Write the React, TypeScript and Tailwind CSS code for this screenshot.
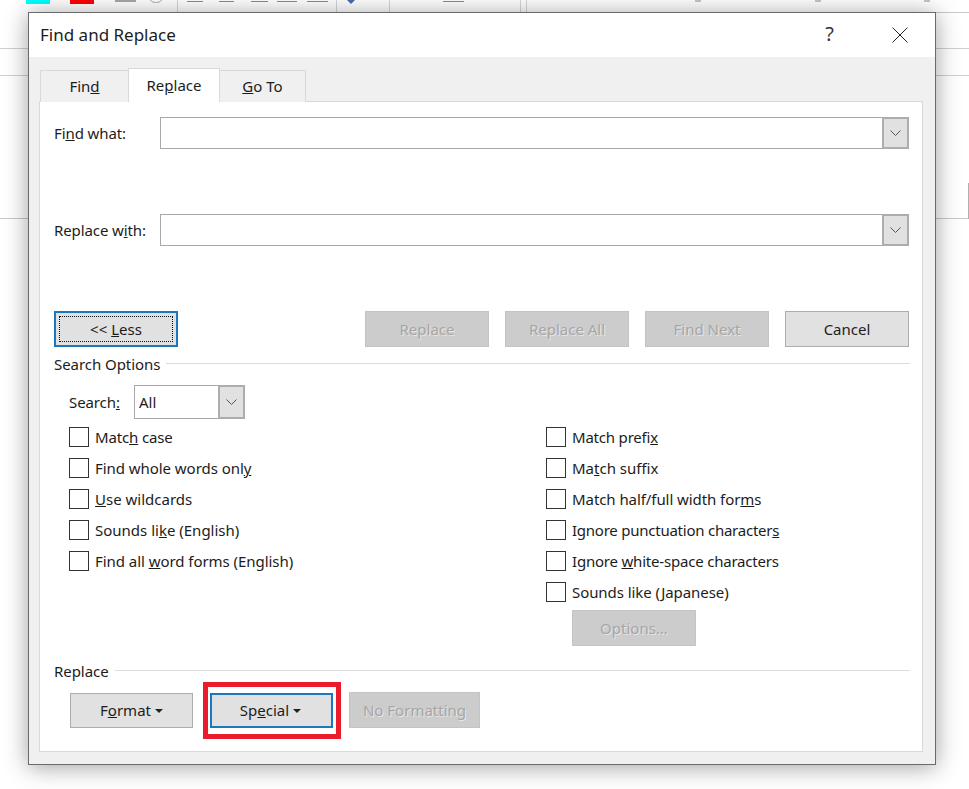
const font = "font-['Noto_Sans','Open_Sans',sans-serif]";

function Chevron() {
  return (
    <svg width="11" height="6" viewBox="0 0 11 6" fill="none" stroke="#555555" strokeWidth="1">
      <path d="M0.5 0.5 L5.5 5.5 L10.5 0.5" />
    </svg>
  );
}

function Combo() {
  return (
    <div className="flex h-[32px] flex-1 border border-[#a8a8a8] bg-white">
      <div className="flex-1" />
      <div className="-my-px -mr-px flex w-[27px] items-center justify-center border-2 border-[#adadad] bg-[#e1e1e1]">
        <Chevron />
      </div>
    </div>
  );
}

function Check({ children, className = "" }: { children: React.ReactNode; className?: string }) {
  return (
    <div className="flex h-[31px] items-start gap-[6px]">
      <div className="h-[20px] w-[20px] shrink-0 border border-[#333333] bg-white" />
      <div className={"text-[15px] leading-[20px] text-[#1c1c1c] whitespace-nowrap " + className}>{children}</div>
    </div>
  );
}

function Btn({ children, disabled, className = "" }: { children: React.ReactNode; disabled?: boolean; className?: string }) {
  return (
    <div
      className={
        "flex h-[36px] w-[124px] items-center justify-center text-[15px] whitespace-nowrap border " +
        (disabled
          ? "border-[#c4c4c4] bg-[#cccccc] text-[#a6a6a6] [text-shadow:1px_1px_0_#e6e6e6] "
          : "border-[#adadad] bg-[#e1e1e1] text-[#1c1c1c] ") +
        className
      }
    >
      {children}
    </div>
  );
}

function Section({ title }: { title: string }) {
  return (
    <div className="-mr-px flex h-[18px] items-center gap-[6px]">
      <span className="text-[15px] leading-[18px] tracking-[-0.05px] text-[#1c1c1c] whitespace-nowrap">{title}</span>
      <div className="mb-[2px] h-px flex-1 bg-[#dcdcdc]" />
    </div>
  );
}

function Caret() {
  return <span className="ml-[4px] inline-block border-x-[4px] border-t-[4px] border-x-transparent border-t-[#222222] align-[4px]" />;
}

function Backdrop() {
  const marks = [
    "left-[187px] w-[16px]", "left-[219px] w-[15px]", "left-[251px] w-[17px]", "left-[277px] w-[20px]",
    "left-[307px] w-[21px]", "left-[443px] w-[21px]",
  ];
  return (
    <div className="absolute inset-0">
      <div className="absolute left-[26px] top-0 h-[4px] w-[24px] bg-[#00ffff]" />
      <div className="absolute left-[70px] top-0 h-[4px] w-[24px] bg-[#ff0000]" />
      <div className="absolute left-[115px] top-0 h-[2px] w-[21px] bg-[#a6a6a6]" />
      <div className="absolute left-[148px] -top-[12px] h-[15px] w-[16px] rounded-full border border-[#a6a6a6]" />
      {marks.map((m) => (
        <div key={m} className={"absolute top-[1px] h-px bg-[#8c8c8c] " + m} />
      ))}
      {[177, 336, 389, 520, 526].map((x) => (
        <div key={x} className="absolute top-0 h-[12px] w-px bg-[#d6d6d6]" style={{ left: x }} />
      ))}
      {[695, 815, 924].map((x) => (
        <div key={x} className="absolute top-0 h-[2px] w-[6px] bg-[#c4c4c4]" style={{ left: x }} />
      ))}
      <div className="absolute left-[347px] top-0 h-0 w-0 border-x-[4px] border-t-[4px] border-x-transparent border-t-[#4a6bb0]" />
      <div className="absolute left-0 top-[48px] h-px w-full bg-[#d0d0d0]" />
      <div className="absolute left-0 top-[75px] h-px w-full bg-[#d0d0d0]" />
      <div className="absolute left-0 top-[218px] h-px w-full bg-[#c8c8c8]" />
      <div className="absolute left-[936px] top-[12px] h-px w-[33px] bg-[#c8c8c8]" />
      <div className="absolute left-[968px] top-[183px] h-[36px] w-px bg-[#b0b0b0]" />
    </div>
  );
}

export default function App() {
  return (
    <div className={"relative h-[789px] w-[969px] overflow-hidden bg-white " + font}>
      <Backdrop />
      <div className="absolute left-[28px] top-[12px] flex h-[753px] w-[908px] flex-col border border-[#6a6a6a] bg-[#f0f0f0] shadow-[0_2px_22px_rgba(0,0,0,0.38)]">
        {/* Title bar */}
        <div className="flex h-[44px] items-center bg-white pl-[11px] pr-[27px]">
          <div className="flex-1 text-[17px] text-[#1c1c1c]">Find and Replace</div>
          <div className="mr-[58px] pb-[2px] text-[20px] text-[#333333]">?</div>
          <svg width="16" height="16" viewBox="0 0 16 16" fill="none" stroke="#222222" strokeWidth="1">
            <path d="M0.5 0.5 L15.5 15.5 M15.5 0.5 L0.5 15.5" />
          </svg>
        </div>

        {/* Body */}
        <div className="flex flex-1 flex-col pl-[10px] pr-[12px] pb-[12px]">
          {/* Tabs */}
          <div className="relative z-10 -mb-px flex h-[45px] items-end pl-[1px] text-[15px] text-[#1c1c1c]">
            <div className="flex h-[32px] w-[88px] items-center justify-center border border-b-0 border-r-0 border-[#d9d9d9] bg-[#f0f0f0]">
              <span>Fin<u>d</u></span>
            </div>
            <div className="flex h-[34px] w-[92px] items-center justify-center border-x border-t border-[#d9d9d9] bg-white">
              <span>Re<u>p</u>lace</span>
            </div>
            <div className="flex h-[32px] w-[86px] items-center justify-center border-r border-t border-[#d9d9d9] bg-[#f0f0f0]">
              <span><u>G</u>o To</span>
            </div>
          </div>

          {/* Panel */}
          <div className="flex flex-1 flex-col border border-[#d9d9d9] bg-white pl-[14px] pr-[13px] pt-[15px]">
            <div className="flex items-center">
              <div className="w-[106px] text-[15px] tracking-[-0.1px] text-[#1c1c1c]">Fi<u>n</u>d what:</div>
              <Combo />
            </div>
            <div className="mt-[65px] flex items-center">
              <div className="w-[106px] text-[15px] tracking-[-0.1px] text-[#1c1c1c]">Replace w<u>i</u>th:</div>
              <Combo />
            </div>

            <div className="mt-[65px] flex h-[36px] items-center gap-[16px]">
              <div className="mr-[171px] flex h-[36px] w-[124px] items-center justify-center border-2 border-[#1e76bc] bg-[#e1e1e1] p-[3px]">
                <div className="flex h-full w-full items-center justify-center border border-dotted border-[#111111] text-[15px] text-[#1c1c1c]">
                  <span>&lt;&lt; <u>L</u>ess</span>
                </div>
              </div>
              <Btn disabled>Replace</Btn>
              <Btn disabled>Replace All</Btn>
              <Btn disabled>Find Next</Btn>
              <Btn>Cancel</Btn>
            </div>

            <div className="mt-[8px]">
              <Section title="Search Options" />
            </div>

            <div className="mt-[12px] flex h-[34px] items-center pl-[15px]">
              <div className="w-[65px] text-[15px] tracking-[-0.1px] text-[#1c1c1c]">Search<u>:</u></div>
              <div className="flex h-[34px] w-[111px] items-stretch border border-[#a8a8a8] bg-white">
                <div className="flex flex-1 items-center pl-[4px] text-[15px] text-[#1c1c1c]">All</div>
                <div className="-my-px -mr-px flex w-[27px] items-center justify-center border-2 border-[#adadad] bg-[#e1e1e1]">
                  <Chevron />
                </div>
              </div>
            </div>

            <div className="mt-[8px] flex pl-[15px]">
              <div className="w-[477px]">
                <Check className="tracking-[-0.15px]">Matc<u>h</u> case</Check>
                <Check className="tracking-[-0.05px]">Find whole words onl<u>y</u></Check>
                <Check><u>U</u>se wildcards</Check>
                <Check>Sounds li<u>k</u>e (English)</Check>
                <Check className="tracking-[-0.05px]">Find all <u>w</u>ord forms (English)</Check>
              </div>
              <div>
                <Check className="tracking-[-0.2px]">Match prefi<u>x</u></Check>
                <Check>Ma<u>t</u>ch suffix</Check>
                <Check className="tracking-[-0.07px]">Match half/full width for<u>m</u>s</Check>
                <Check className="tracking-[-0.24px]">Ignore punctuation character<u>s</u></Check>
                <Check className="tracking-[-0.2px]">Ignore <u>w</u>hite-space characters</Check>
                <Check className="tracking-[-0.07px]">Sounds like (<u>J</u>apanese)</Check>
                <div className="-mt-[3px] pl-[26px]">
                  <Btn disabled>Options...</Btn>
                </div>
              </div>
            </div>

            <div className="mt-[16px]">
              <Section title="Replace" />
            </div>

            <div className="mt-[12px] flex h-[36px] items-end pl-[16px]">
              <div className="flex h-[35px] w-[123px] items-center justify-center border border-[#adadad] bg-[#e1e1e1] text-[15px] text-[#1c1c1c]">
                <span>F<u>o</u>rmat</span><Caret />
              </div>
              <div className="relative ml-[17px] flex h-[35px] w-[123px] items-center justify-center border-2 border-[#1e76bc] bg-[#e1e1e1] pr-[2px] text-[15px] text-[#1c1c1c]">
                <span>Sp<u>e</u>cial</span><Caret />
                <div className="absolute -bottom-[13px] -left-[9px] -right-[10px] -top-[13px] border-[5px] border-[#e81c2c]" />
              </div>
              <Btn disabled className="ml-[16px] w-[131px]">No Formatting</Btn>
            </div>
          </div>
        </div>
      </div>
    </div>
  );
}
